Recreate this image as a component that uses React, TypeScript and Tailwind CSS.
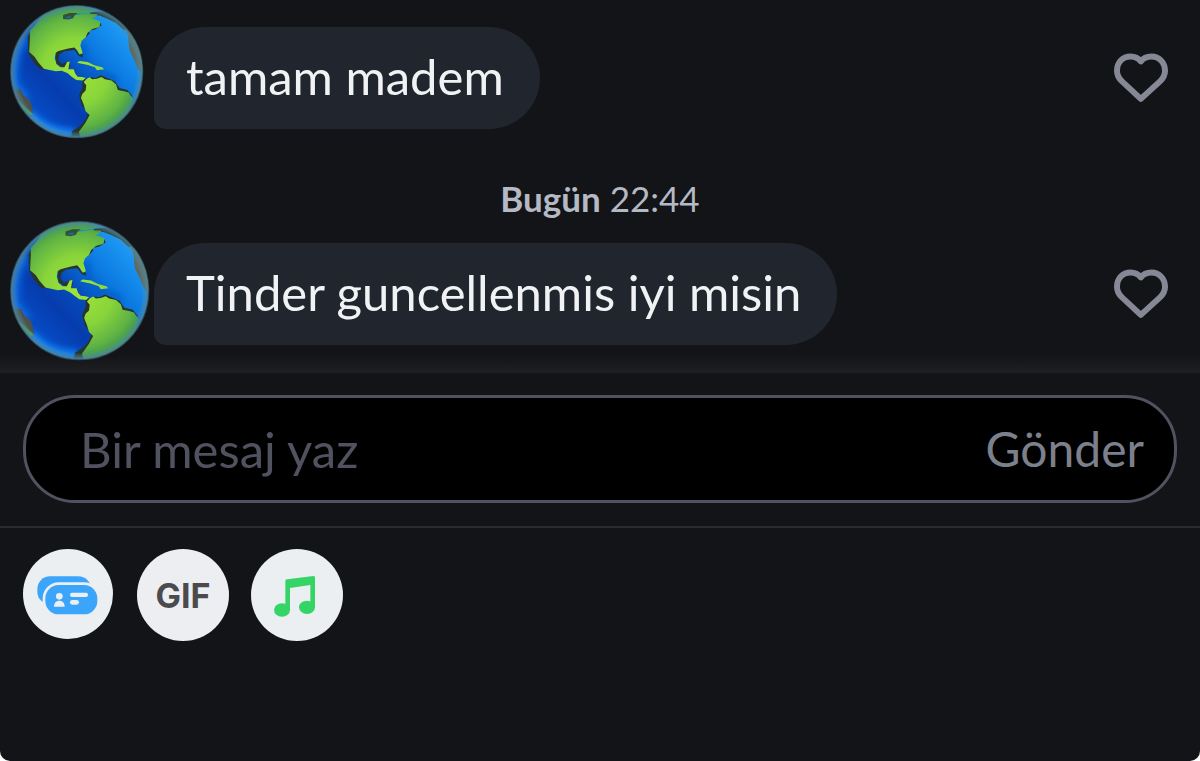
// App.tsx
import { useId, useState } from "react";

type Message = {
	id: number;
	text: string;
	avatarClass: string;
};

const firstMessage: Message = {
	id: 1,
	text: "tamam madem",
	avatarClass: "size-[134px]",
};

const lastMessage: Message = {
	id: 2,
	text: "Tinder guncellenmis iyi misin",
	avatarClass: "size-[140px]",
};

function Globe({ className }: { className: string }) {
	const id = useId();

	return (
		<svg viewBox="28 14 404 404" className={className} aria-hidden="true">
			<defs>
				<linearGradient id={`${id}sea`} x1="0.15" y1="0.85" x2="0.85" y2="0.2">
					<stop offset="0" stopColor="#0650cc" />
					<stop offset="0.3" stopColor="#063cae" />
					<stop offset="0.5" stopColor="#064cba" />
					<stop offset="0.72" stopColor="#0a78e0" />
					<stop offset="1" stopColor="#1c98f4" />
				</linearGradient>
				<radialGradient id={`${id}land`} gradientUnits="userSpaceOnUse" cx="225" cy="215" r="205">
					<stop offset="0" stopColor="#a0e636" />
					<stop offset="0.5" stopColor="#88d43a" />
					<stop offset="0.8" stopColor="#60b444" />
					<stop offset="1" stopColor="#36904c" />
				</radialGradient>
				<radialGradient id={`${id}rim`}>
					<stop offset="0.9" stopColor="#5a96b0" stopOpacity="0" />
					<stop offset="1" stopColor="#4c8498" stopOpacity="0.9" />
				</radialGradient>
				<clipPath id={`${id}clip`}>
					<circle cx="229" cy="215" r="199" />
				</clipPath>
				<filter id={`${id}soft`} x="-50%" y="-50%" width="200%" height="200%">
					<feGaussianBlur stdDeviation="10" />
				</filter>
			</defs>
			<g clipPath={`url(#${id}clip)`}>
				<circle cx="229" cy="215" r="199" fill={`url(#${id}sea)`} />
				<path
					d="M76 112C50 150 38 200 44 254C55 266 66 285 80 300"
					fill="none"
					stroke="#0c70e4"
					strokeWidth="22"
					filter={`url(#${id}soft)`}
				/>
				<path
					d="M84 338C125 386 170 400 224 401"
					fill="none"
					stroke="#1688fa"
					strokeWidth="24"
					filter={`url(#${id}soft)`}
				/>
				<path
					d="M250 132C248 155 240 178 265 210C300 226 320 228 350 240"
					fill="none"
					stroke="#075cc8"
					strokeWidth="16"
					filter={`url(#${id}soft)`}
				/>
				{/* land edges */}
				<g fill="#29342a">
					<path d="M104 76L92 88L82 108L82 134L84 160L96 182L112 202L128 210L132 204L104 164L90 100Z" />
					<path d="M166 158L172 151L204 141L222 140L234 160L248 164L246 172L234 166L222 150L190 154L176 164L174 180L184 192L204 184L210 196L204 208L188 202L168 190Z" />
					<path d="M246 238L246 262L236 286L244 316L264 340L254 362L240 378L216 394L212 412L242 408L274 350L256 236Z" />
					<path d="M262 238L270 232L286 234L302 226L344 244L358 264L382 270L400 292L380 280L350 274L330 246L280 242Z" />
					<path d="M270 34L312 34L354 58L384 90L370 88L348 68L318 54L298 46L270 44Z" />
					<path d="M300 66L304 76L284 88L266 92L268 100L254 114L240 124L250 104L266 84L290 78Z" />
				</g>
				<g fill={`url(#${id}land)`}>
					<path d="M104 74L88 92L88 112L86 156L102 170L114 188L130 206L166 214L184 212L202 220L214 230L228 240L248 242L256 234L246 231L232 230L224 220L220 208L204 208L208 184L200 186L192 202L180 202L168 192L163 174L166 158L174 153L204 145L222 142L230 150L238 163L247 159L240 136L244 122L256 112L262 98L276 86L298 80L301 64L286 58L276 56L290 46L292 42L258 40L230 44L218 42L260 38L290 34L240 14L190 14L130 38Z" />
					<path d="M250 246L258 238L268 232L276 238L290 236L304 231L314 238L334 242L348 254L353 270L372 274L386 278L400 300L388 338L352 378L310 406L240 414L236 396L256 368L268 346L256 334L250 314L242 294L246 282L256 272L258 256Z" />
					<path d="M230 188L238 183L262 186L282 196L306 202L312 208L290 211L284 202L260 194Z" />
					<path d="M46 290L62 306L76 320L98 344L84 346L58 320Z" />
				</g>
				<path d="M188 44L208 38L232 38L222 46L218 54L204 58L188 56Z" fill="#374e30" />
				<path d="M194 50L210 46L214 52L200 56Z" fill="#156894" />
				<path d="M40 268L60 268L68 286L86 300L92 312L98 342L78 326L60 308L42 294Z" fill="#4e5148" />
				<path d="M378 88L392 96L420 150L428 215L416 212L402 178L388 150L384 108Z" fill="#5e6a60" />
				<path d="M386 92C410 124 424 160 427 212" fill="none" stroke="#a2b13c" strokeWidth="3" />
				<circle cx="229" cy="215" r="199" fill={`url(#${id}rim)`} />
			</g>
			<circle cx="229" cy="215" r="199" fill="none" stroke="#3e6270" strokeWidth="4" strokeOpacity="0.6" />
		</svg>
	);
}

function HeartIcon() {
	return (
		<svg viewBox="102 72 163 148" className="h-[50px] w-[54px]" aria-hidden="true">
			<path
				d="M183 96C174 84 163 81 152 81C128 81 111 99 111 124C111 138 117 148 127 157L183 209L240 157C250 148 256 138 256 124C256 99 238 81 215 81C203 81 191 85 183 96Z"
				fill="none"
				stroke="#868995"
				strokeWidth="18"
				strokeLinejoin="round"
			/>
		</svg>
	);
}

function CardIcon() {
	return (
		<svg viewBox="0 0 276 276" className="size-full" aria-hidden="true">
			<circle cx="135" cy="135" r="135" fill="#ebeff2" />
			<rect x="43" y="82" width="161" height="84" rx="38" fill="#3ba5fb" />
			<rect x="59" y="100" width="172" height="104" rx="48" fill="#ebeff2" />
			<rect x="67" y="108" width="156" height="88" rx="40" fill="#3ba5fb" />
			<g fill="#ebeff2">
				<circle cx="109" cy="142" r="10" />
				<path d="M93 173C93 161 100 155 109 155C118 155 125 161 125 173Z" />
				<rect x="141" y="131" width="54" height="13" rx="6" />
				<rect x="141" y="153" width="27" height="14" rx="7" />
			</g>
		</svg>
	);
}

function MusicIcon() {
	return (
		<svg viewBox="0 0 276 276" className="size-full" aria-hidden="true" fill="#34d566">
			<path d="M103 96Q103 91 108 91L187 81Q192 80 192 86V174H178V108L117 117V183H103Z" />
			<ellipse cx="93" cy="183" rx="24" ry="20" />
			<ellipse cx="168" cy="175" rx="24" ry="20" />
		</svg>
	);
}

function MessageRow({ message }: { message: Message }) {
	const [liked, setLiked] = useState(false);

	return (
		<li className="flex items-start pl-[10px] pr-8">
			<div className="w-36 shrink-0">
				<Globe className={message.avatarClass} />
			</div>
			<div className="flex flex-1 items-center justify-between pt-[22px]">
				<p className="rounded-[51px] rounded-bl-[12px] bg-[#21262e] pt-[21px] pr-9 pb-[25px] pl-8 text-[49px] leading-[56px] text-[#f0f2f4]">
					{message.text}
				</p>
				<button
					type="button"
					aria-label="Beğen"
					aria-pressed={liked}
					onClick={() => setLiked(!liked)}
				>
					<HeartIcon />
				</button>
			</div>
		</li>
	);
}

export default function App() {
	const [text, setText] = useState("");

	const actionClass = "flex size-[92px] items-center justify-center rounded-full";

	return (
		<div className="bg-white font-['Lato',sans-serif]">
			<main className="flex min-h-screen flex-col overflow-hidden rounded-b-[10px] bg-[#131418]">
				<section className="bg-[linear-gradient(to_top,#1f2024,#131418_18px)] pt-[5px] pb-3">
					<ul>
						<MessageRow message={firstMessage} />
						<li className="pt-9 text-center text-[35px] leading-[46px] text-[#b4b9c4]">
							<time>
								<b>Bugün</b> 22:44
							</time>
						</li>
						<MessageRow message={lastMessage} />
					</ul>
				</section>

				{/* message box */}
				<form
					className="border-b-2 border-[#2b2c31] px-[23px] pt-[22px] pb-[23px]"
					onSubmit={(e) => e.preventDefault()}
				>
					<div className="flex h-[108px] items-center rounded-[52px] border-3 border-[#50535f] bg-black pr-[30px] pl-[54px]">
						<input
							type="text"
							aria-label="Bir mesaj yaz"
							placeholder="Bir mesaj yaz"
							value={text}
							onChange={(e) => setText(e.target.value)}
							className="min-w-0 flex-1 bg-transparent text-[49px] leading-[56px] text-white outline-none placeholder:text-[#505260]"
						/>
						<button type="submit" className="text-[48px] leading-[56px] text-[#7c808c]">
							Gönder
						</button>
					</div>
				</form>

				<div className="flex gap-[22px] px-[23px] pt-[21px]">
					<button type="button" aria-label="Kart" className={actionClass}>
						<CardIcon />
					</button>
					<button
						type="button"
						className={`${actionClass} bg-[#edeef2] font-['Inter',sans-serif] text-[34px] font-bold text-[#4b4b4d]`}
					>
						GIF
					</button>
					<button type="button" aria-label="Müzik" className={`${actionClass} bg-[#ebeff2]`}>
						<MusicIcon />
					</button>
				</div>
			</main>
		</div>
	);
}
